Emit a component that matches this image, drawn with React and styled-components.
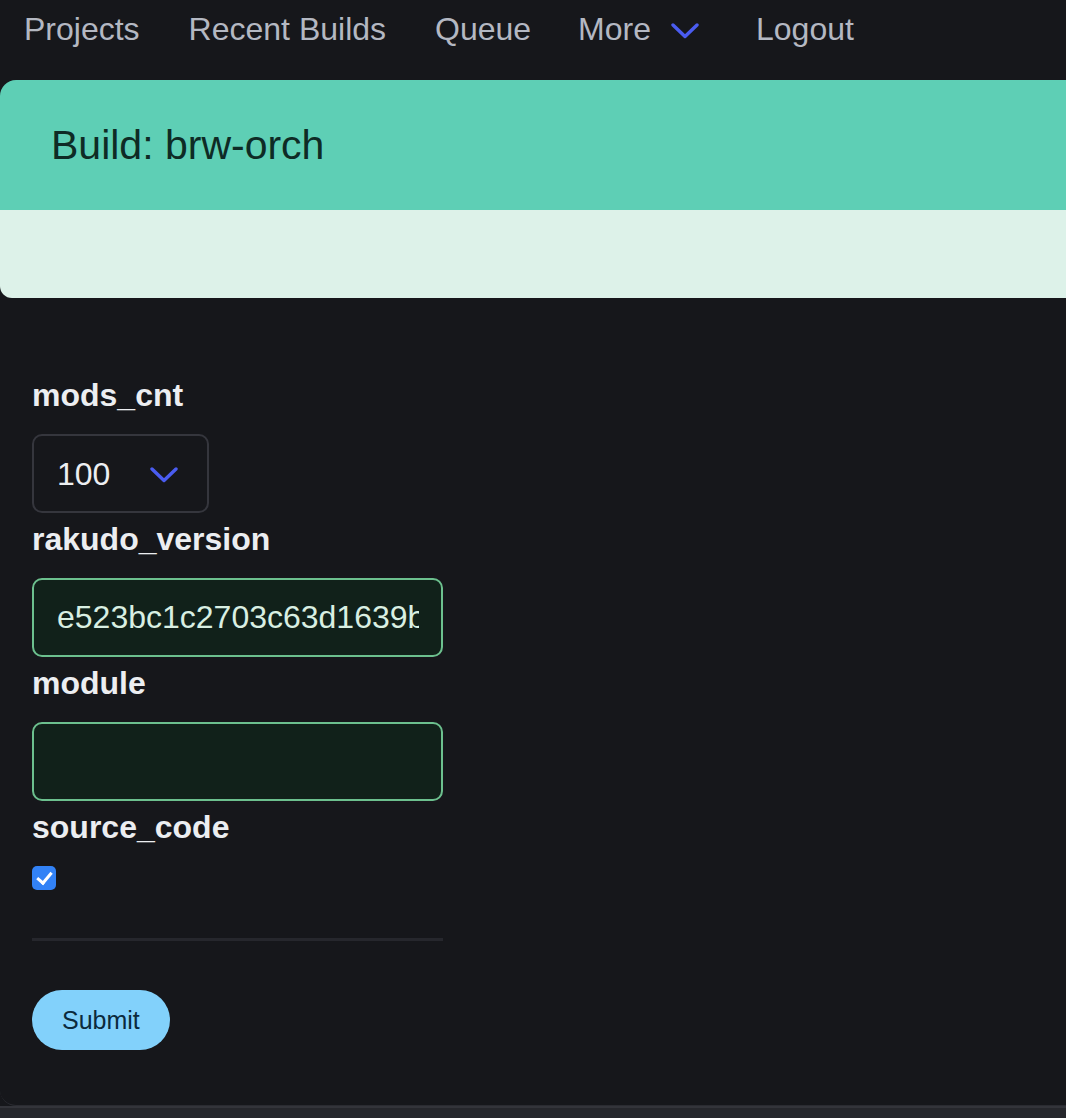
import React from 'react';
import styled, {createGlobalStyle} from 'styled-components';

const GlobalStyle = createGlobalStyle`
  html, body {
    margin: 0;
    padding: 0;
    background: #16171b;
    font-family: "Liberation Sans", Arial, sans-serif;
  }
`;

const Chevron = ({width = 28, height = 16}) => (
  <svg width={width} height={height} viewBox="0 0 28 16" fill="none">
    <path d="M2 2 L14 13.5 L26 2" stroke="#4a5cf0" strokeWidth="3.4" strokeLinecap="round" strokeLinejoin="round"/>
  </svg>
);

const App = () => {
  return (
    <Page>
      <GlobalStyle/>
      <Nav>
        <NavLink href="#">Projects</NavLink>
        <NavLink href="#">Recent Builds</NavLink>
        <NavLink href="#">Queue</NavLink>
        <NavLink href="#" $menu>
          More
          <NavChevron><Chevron/></NavChevron>
        </NavLink>
        <NavLink href="#">Logout</NavLink>
      </Nav>

      <Card>
        <CardHeader>
          <Title>Build: brw-orch</Title>
        </CardHeader>
        <SubBar/>

        <Form onSubmit={e => e.preventDefault()}>
          <Label>mods_cnt</Label>
          <SelectWrap>
            <Select defaultValue="100">
              <option>10</option>
              <option>100</option>
              <option>1000</option>
            </Select>
            <SelectIcon><Chevron/></SelectIcon>
          </SelectWrap>

          <Label>rakudo_version</Label>
          <TextInput defaultValue="e523bc1c2703c63d1639bd2a1f"/>

          <Label>module</Label>
          <TextInput defaultValue=""/>

          <Label>source_code</Label>
          <Checkbox type="checkbox" defaultChecked/>

          <Divider/>

          <SubmitButton type="submit">Submit</SubmitButton>
        </Form>
      </Card>
      <Footer/>
    </Page>
  );
};

export default App;

const Page = styled.div`
  min-height: 1118px;
  display: flex;
  flex-direction: column;
  background: #16171b;
`;

const Nav = styled.nav`
  height: 80px;
  display: flex;
  align-items: flex-start;
  gap: 49px;
  padding-left: 24px;
`;

const NavLink = styled.a`
  display: flex;
  align-items: center;
  height: 58px;
  font-size: 32px;
  color: #b4b8c2;
  text-decoration: none;
  gap: ${p => (p.$menu ? '20px' : '0')};
  margin-left: ${p => (p.$menu ? '-2px' : '0')};
  margin-right: ${p => (p.$menu ? '8px' : '0')};
`;

const NavChevron = styled.span`
  display: flex;
  margin-top: 4px;
`;

const Card = styled.section`
  flex: 1;
  background: #16171b;
  border-radius: 16px 0 0 16px;
  border-bottom: 1px solid #2a2b31;
  display: flex;
  flex-direction: column;
`;

const CardHeader = styled.header`
  height: 130px;
  background: #5ecfb5;
  border-top-left-radius: 16px;
  display: flex;
  align-items: center;
  padding-left: 51px;
`;

const Title = styled.h1`
  margin: 0;
  font-size: 41px;
  font-weight: normal;
  color: #0e2b25;
`;

const SubBar = styled.div`
  height: 88px;
  background: #ddf2e9;
  border-bottom-left-radius: 12px;
`;

const Form = styled.form`
  display: flex;
  flex-direction: column;
  align-items: flex-start;
  padding: 71px 0 55px 32px;
`;

const Label = styled.label`
  display: block;
  margin: 6px 0 19px;
  line-height: 40px;
  font-size: 32px;
  font-weight: bold;
  color: #eceef1;
`;

const SelectWrap = styled.div`
  position: relative;
  width: 177px;
  height: 79px;
`;

const Select = styled.select`
  appearance: none;
  width: 100%;
  height: 100%;
  box-sizing: border-box;
  background: #16171b;
  border: 2px solid #35363d;
  border-radius: 10px;
  padding: 0 0 0 23px;
  font-family: "Liberation Sans", Arial, sans-serif;
  font-size: 32px;
  color: #eceef1;
  outline: none;
`;

const SelectIcon = styled.span`
  position: absolute;
  left: 118px;
  top: 33px;
  display: flex;
  pointer-events: none;
`;

const TextInput = styled.input`
  width: 411px;
  height: 79px;
  box-sizing: border-box;
  background: #11211a;
  border: 2px solid #6cc08e;
  border-radius: 10px;
  padding: 0 22px 0 23px;
  font-family: "Liberation Sans", Arial, sans-serif;
  font-size: 32px;
  color: #d9efe2;
  outline: none;
`;

const Checkbox = styled.input`
  appearance: none;
  position: relative;
  margin: 0;
  width: 24px;
  height: 24px;
  border-radius: 5px;
  background: #3282f6;

  &::after {
    content: '';
    position: absolute;
    left: 8px;
    top: 3px;
    width: 6px;
    height: 12px;
    border: solid #fff;
    border-width: 0 3px 3px 0;
    transform: rotate(40deg);
  }
`;

const Divider = styled.hr`
  width: 411px;
  height: 3px;
  margin: 48px 0 49px;
  border: none;
  background: #26272d;
`;

const SubmitButton = styled.button`
  height: 60px;
  padding: 0 30px;
  border: none;
  border-radius: 30px;
  background: #82d1fb;
  font-family: "Liberation Sans", Arial, sans-serif;
  font-size: 25px;
  color: #0b2a3c;
  cursor: pointer;
`;

const Footer = styled.footer`
  height: 12px;
  background: #26272c;
  border-top: 2px solid #33343a;
`;
